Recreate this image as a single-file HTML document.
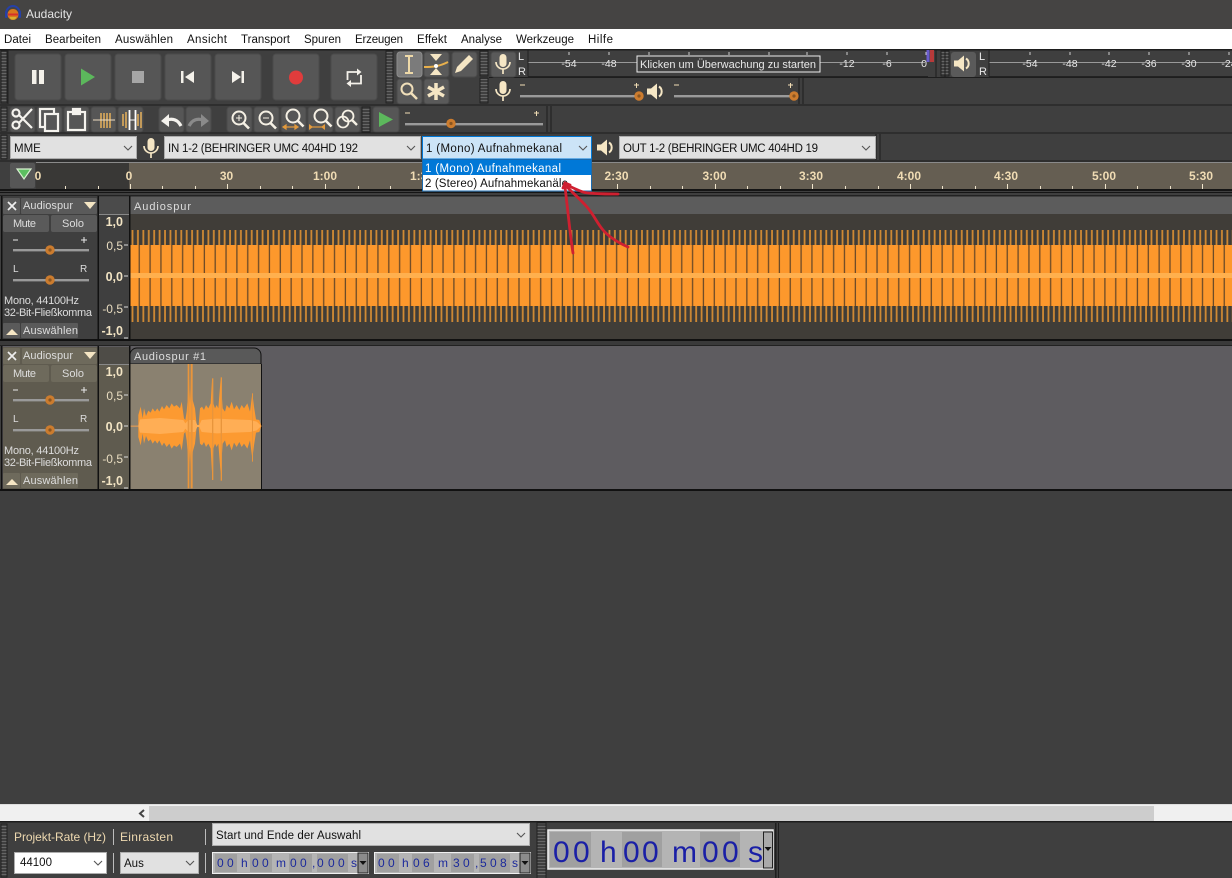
<!DOCTYPE html>
<html><head><meta charset="utf-8"><title>Audacity</title>
<style>
html,body{margin:0;padding:0;background:#3f3f3f;width:1232px;height:878px;overflow:hidden}
svg{display:block;position:absolute;left:0;top:0}
text{font-family:"Liberation Sans",sans-serif}
.m{font-size:11.5px;fill:#111}
.c{font-size:11.5px;fill:#111}
.t{font-size:11px;fill:#ddd}
.r{font-size:12px;font-weight:bold;fill:#f0dcb4;text-anchor:middle}
.v{font-size:10.5px;fill:#e8e8e8;text-anchor:middle}
.y{font-size:12px;fill:#e8dcc0;text-anchor:end}
.yb{font-size:12.5px;font-weight:bold;fill:#f2e4c4;text-anchor:end}
.l{font-size:12px;fill:#eed9b0}
.d{font-size:12px;fill:#1c2a9c}
.D{font-size:30px;fill:#1a1fa6}
</style></head><body>
<svg width="1232" height="878" viewBox="0 0 1232 878" xmlns="http://www.w3.org/2000/svg">
<defs>
<pattern id="solid" x="130" y="0" width="10.85" height="10" patternUnits="userSpaceOnUse"><rect width="10.85" height="10" fill="#fd982c"/><rect x="8.6" width="1.3" height="10" fill="#6b4a28"/></pattern>
<pattern id="thin" x="130" y="0" width="5.42" height="10" patternUnits="userSpaceOnUse"><rect width="5.42" height="10" fill="#403d38"/><rect x="1.6" width="1.8" height="10" fill="#d08a34"/></pattern>
<pattern id="grip" width="6" height="3" patternUnits="userSpaceOnUse"><rect width="6" height="1" y="1" fill="#666"/></pattern>
<g id="mic" fill="#f5e6c4"><rect x="-3.500" y="-10" width="7" height="13" rx="3.500"/><path d="M-7-2a7 7 0 0 0 14 0M0 5v5" fill="none" stroke="#f5e6c4" stroke-width="1.700"/></g>
<g id="spk" fill="#f5e6c4"><path d="M-9-3h4l6-5v16l-6-5h-4z"/><path d="M3-5a6 6 0 0 1 0 10" fill="none" stroke="#f5e6c4" stroke-width="2"/></g>
<path id="chev" d="M-4-2l4 4 4-4" fill="none" stroke="#555" stroke-width="1.100"/>
<g id="pan"><rect x="13" y="0" width="76" height="2.400" fill="#9a9a9a"/><circle cx="50" cy="1" r="4.700" fill="#cc7c2e"/><circle cx="50" cy="1" r="1.600" fill="#8a5520"/></g>
<g id="knob"><circle r="4.700" fill="#cc7c2e"/><circle r="1.600" fill="#8a5520"/></g>
<g id="mag" fill="none" stroke="#f5f0e4" stroke-width="2"><circle cx="-1" cy="-2" r="6.500"/><path d="M3.500 3l5.500 5.500" stroke-width="2.600"/></g>
<g id="wfh">
<polygon points="415,258 415,225 422,200 428,235 432,205 438,228 445,212 452,218 458,205 465,215 472,205 478,215 486,198 492,208 500,195 508,205 515,190 522,200 530,195 540,205 545,185 552,235 556,240 560,215 563,180 566,78 570,190 574,72 578,180 585,205 590,255 596,255 600,205 606,200 612,210 618,195 625,205 632,190 636,120 640,190 645,205 650,195 655,205 662,115 668,205 675,215 680,195 688,205 695,185 702,208 710,195 718,210 725,195 732,205 742,190 750,215 757,160 762,200 768,238 778,240 784,258" fill="#fc9a31"/>
</g>
</defs>

<!-- title bar -->
<rect width="1232" height="29" fill="#454443"/>
<path d="M6 14a7 8 0 0 1 14 0" fill="none" stroke="#2640a8" stroke-width="2"/>
<circle cx="13" cy="14.500" r="5.500" fill="#d9781e"/><rect x="8" y="13.500" width="10" height="2" fill="#d8302a"/><path d="M9.500 17h7l-1.500 2.500h-4z" fill="#d8b030"/>
<rect x="5" y="11" width="2.600" height="7" rx="1" fill="#2640a8"/><rect x="18.400" y="11" width="2.600" height="7" rx="1" fill="#2640a8"/>
<text x="26" y="18" fill="#e4e4e4" style="font-size:12px">Audacity</text>

<!-- menu -->
<rect y="29" width="1232" height="20" fill="#fff"/>
<text class="m" x="4" y="43" textLength="27">Datei</text>
<text class="m" x="45" y="43" textLength="56">Bearbeiten</text>
<text class="m" x="115" y="43" textLength="58">Auswählen</text>
<text class="m" x="187" y="43" textLength="40">Ansicht</text>
<text class="m" x="241" y="43" textLength="49">Transport</text>
<text class="m" x="304" y="43" textLength="37">Spuren</text>
<text class="m" x="355" y="43" textLength="48">Erzeugen</text>
<text class="m" x="417" y="43" textLength="30">Effekt</text>
<text class="m" x="461" y="43" textLength="41">Analyse</text>
<text class="m" x="516" y="43" textLength="58">Werkzeuge</text>
<text class="m" x="588" y="43" textLength="25">Hilfe</text>

<!-- toolbar base -->
<rect y="49" width="1232" height="113" fill="#3f3f3f"/>
<rect y="49" width="1232" height="1.500" fill="#1e1e1e"/>
<rect y="104.500" width="1232" height="1" fill="#1e1e1e"/>
<rect y="132.500" width="1232" height="1" fill="#1e1e1e"/>
<rect y="160.500" width="1232" height="1" fill="#1e1e1e"/>

<!-- grippers -->
<g fill="url(#grip)" stroke="#222" stroke-width="1">
<rect x="1" y="51" width="6" height="52"/><rect x="386" y="51" width="7" height="52"/>
<rect x="1" y="107" width="6" height="24"/><rect x="1" y="135" width="6" height="24"/>
<rect x="362" y="107" width="8" height="25"/>
<rect x="480" y="51" width="8" height="25"/><rect x="480" y="78" width="8" height="25"/>
<rect x="941" y="51" width="8" height="25"/>
</g>
<rect x="7.500" y="50" width="1" height="54" fill="#222"/>
<path d="M547 106v26M551 106v26M803 78v26M799 78v26M876 134v26M880 134v26M945 50v27M936 50v27" stroke="#1c1c1c" stroke-width="1"/>
<rect x="489" y="77" width="743" height="1" fill="#1e1e1e"/>

<!-- transport -->
<g fill="#565656" stroke="#4b4b4b">
<rect x="15" y="54" width="46" height="46" rx="3"/><rect x="65" y="54" width="46" height="46" rx="3"/><rect x="115" y="54" width="46" height="46" rx="3"/><rect x="165" y="54" width="46" height="46" rx="3"/><rect x="215" y="54" width="46" height="46" rx="3"/><rect x="273" y="54" width="46" height="46" rx="3"/><rect x="331" y="54" width="46" height="46" rx="3"/>
</g>
<path d="M32 70h4.500v14H32zM39 70h5v14h-5z" fill="#f4f1ea"/>
<path d="M81 68.500l14 8.500-14 8.500z" fill="#5cb85c"/>
<rect x="132" y="71" width="12" height="12" fill="#a6a6a6"/>
<path d="M181 71h2.500v12H181zM194 71v12l-9-6z" fill="#f4f1ea"/>
<path d="M232 71l9 6-9 6zM241.500 71h2.500v12h-2.500z" fill="#f4f1ea"/>
<circle cx="296" cy="77.500" r="7" fill="#e03c3c"/>
<path d="M347.500 80v-8h10M361 75v8.500h-10" fill="none" stroke="#f4f1ea" stroke-width="1.800"/>
<path d="M357 68.500l4.500 3.500-4.500 3.500zM351 80l-4.500 3.500 4.500 3.500z" fill="#f4f1ea"/>

<!-- tools -->
<rect x="397" y="52" width="25" height="25" rx="3" fill="#7b7b7b" stroke="#8c8c8c"/>
<g fill="#5a5a5a" stroke="#4b4b4b">
<rect x="424" y="52" width="25" height="25" rx="3"/><rect x="452" y="52" width="25" height="25" rx="3"/>
<rect x="397" y="79" width="25" height="25" rx="3"/><rect x="424" y="79" width="25" height="25" rx="3"/>
<rect x="491" y="52" width="25" height="25" rx="3"/>
</g>
<path d="M405 56h8M409 56v17M405 73h8" stroke="#eed9a8" stroke-width="2" fill="none"/>
<path d="M430 54h12l-6 7zM430 75h12l-6-7z" fill="#f5e6c4"/>
<path d="M424 67c8 0 14 0 24-5" stroke="#e8b04c" stroke-width="2" fill="none"/><circle cx="436" cy="66" r="2" fill="#fff"/>
<path d="M455 73l2-6 12-12 4 4-12 12z" fill="#f5e6c4"/>
<circle cx="407" cy="89" r="5.500" fill="none" stroke="#f0dfba" stroke-width="2"/><path d="M411 93l6 6" stroke="#f0dfba" stroke-width="2.500"/>
<path d="M436 83v17M428 87l16 9M444 87l-16 9" stroke="#f5e6c4" stroke-width="3.500"/>
<use href="#mic" x="503" y="64"/>
<use href="#mic" x="503" y="91"/>

<!-- meters -->
<text x="518" y="60" style="font-size:11px" fill="#e8e8e8">L</text><text x="518" y="75" style="font-size:11px" fill="#e8e8e8">R</text>
<rect x="528" y="62" width="397" height="1" fill="#999"/>
<path d="M528 50.500v26M528 76.500h400" stroke="#222" fill="none"/>
<g stroke="#ccc"><path d="M569 52v3M609 52v3M649 52v3M689 52v3M729 52v3M769 52v3M807 52v3M847 52v3M887 52v3M926 52v3"/></g>
<text class="v" x="569" y="67">-54</text><text class="v" x="609" y="67">-48</text>
<text class="v" x="847" y="67">-12</text><text class="v" x="887" y="67">-6</text><text class="v" x="924" y="67">0</text>
<rect x="637" y="56" width="183" height="16" fill="#3f3f3f" stroke="#eee"/>
<text x="640" y="68" fill="#e8e8e8" style="font-size:11px" textLength="176">Klicken um Überwachung zu starten</text>
<rect x="926.500" y="50" width="3" height="12" fill="#6a5ccc"/><rect x="930" y="50" width="4" height="12" fill="#b83a3a"/>
<rect x="951" y="52" width="25" height="25" rx="3" fill="#5a5a5a"/>
<use href="#spk" x="963" y="63.500"/>
<text x="979" y="60" style="font-size:11px" fill="#e8e8e8">L</text><text x="979" y="75" style="font-size:11px" fill="#e8e8e8">R</text>
<rect x="989" y="62" width="243" height="1" fill="#999"/>
<path d="M989 50.500v26M989 76.500h243" stroke="#222" fill="none"/>
<g stroke="#ccc"><path d="M1030 52v3M1070 52v3M1109 52v3M1149 52v3M1189 52v3M1229 52v3"/></g>
<text class="v" x="1030" y="67">-54</text><text class="v" x="1070" y="67">-48</text><text class="v" x="1109" y="67">-42</text><text class="v" x="1149" y="67">-36</text><text class="v" x="1189" y="67">-30</text><text class="v" x="1229" y="67">-24</text>

<!-- mixer sliders -->
<rect x="520" y="95" width="118" height="2.400" fill="#9a9a9a"/>
<path d="M520 85h5M634 85h5M636.500 83v5" stroke="#f0dcb4"/>
<use href="#knob" x="639" y="96"/>
<use href="#spk" x="656" y="91.500"/>
<rect x="674" y="95" width="120" height="2.400" fill="#9a9a9a"/>
<path d="M674 85h5M788 85h5M790.500 83v5" stroke="#f0dcb4"/>
<use href="#knob" x="794" y="96"/>

<!-- edit row -->
<g fill="#565656" stroke="#4b4b4b">
<rect x="10" y="107" width="25" height="25" rx="3"/><rect x="37" y="107" width="25" height="25" rx="3"/><rect x="64" y="107" width="25" height="25" rx="3"/><rect x="91" y="107" width="25" height="25" rx="3"/><rect x="118" y="107" width="25" height="25" rx="3"/>
<rect x="159" y="107" width="25" height="25" rx="3"/><rect x="186" y="107" width="25" height="25" rx="3"/>
<rect x="227" y="107" width="25" height="25" rx="3"/><rect x="254" y="107" width="25" height="25" rx="3"/><rect x="281" y="107" width="25" height="25" rx="3"/><rect x="308" y="107" width="25" height="25" rx="3"/><rect x="335" y="107" width="25" height="25" rx="3"/>
<rect x="373" y="107" width="26" height="25" rx="3"/>
</g>
<g fill="none" stroke="#f5f3ee" stroke-width="2.200">
<circle cx="16" cy="125" r="3.500"/><circle cx="16" cy="113" r="3.500"/><path d="M19 115l13 13M19 123l13-14"/>
<rect x="40" y="109" width="14" height="18"/><rect x="45" y="114" width="13" height="17" fill="#565656"/>
<rect x="68" y="112" width="17" height="18"/><rect x="73" y="109" width="7" height="5" fill="#f5f3ee"/>
</g>
<g fill="none" stroke="#e6b05c" stroke-width="1.500">
<path d="M101 113v15M104 113v15M107 113v15M110 113v15"/><path d="M123 114v12M126 112v16M138 114v12M141 112v16"/>
</g>
<path d="M93 120h22" stroke="#eedcc0"/><path d="M129.500 110v20M135.500 110v20" stroke="#fff" stroke-width="1.800"/><path d="M130 120h5" stroke="#fff"/>
<path d="M161 121l8-7v13z" fill="#f5f3ee"/><path d="M167 120c6-2 11 0 14 6" fill="none" stroke="#f5f3ee" stroke-width="3.200"/>
<path d="M209 121l-8-7v13z" fill="#8a8a8a"/><path d="M203 120c-6-2-11 0-14 6" fill="none" stroke="#8a8a8a" stroke-width="3.200"/>
<use href="#mag" x="240" y="120"/><path d="M236 118h6M239 115v6" stroke="#f5f0e4"/>
<use href="#mag" x="267" y="120"/><path d="M263 118h6" stroke="#f5f0e4"/>
<g fill="none" stroke="#f5f0e4" stroke-width="2"><circle cx="293" cy="116" r="6.500"/><path d="M298 121l5.500 5.500" stroke-width="2.600"/><circle cx="321" cy="116" r="6.500"/><path d="M326 121l5.500 5.500" stroke-width="2.600"/></g>
<path d="M284 127h13M286 125l-3 2 3 2zM295 125l3 2-3 2z" stroke="#e39a3c" fill="#e39a3c" stroke-width="1.200"/>
<path d="M309 127h15" stroke="#e39a3c" stroke-width="1.200"/><path d="M309 124v6l4-3zM325 124v6l-4-3z" fill="#e39a3c"/>
<g fill="none" stroke="#f5f0e4" stroke-width="1.800"><circle cx="343" cy="122" r="5.500"/><circle cx="348" cy="116" r="5.500"/><path d="M352 120l5 5" stroke-width="2.400"/></g>
<path d="M379 112l14 7.500-14 7.500z" fill="#5cb85c"/>
<rect x="405" y="123" width="138" height="2.400" fill="#9a9a9a"/>
<path d="M405 113h5M534 113h5M536.500 111v5" stroke="#f0dcb4"/>
<use href="#knob" x="451" y="123.500"/>

<!-- device row -->
<g fill="#e1e1e1" stroke="#adadad">
<rect x="10.500" y="136.500" width="126" height="22"/><rect x="164.500" y="136.500" width="256" height="22"/><rect x="619.500" y="136.500" width="256" height="22"/>
</g>
<text class="c" x="14" y="152">MME</text>
<use href="#chev" x="128" y="148"/>
<g transform="translate(151 148)"><use href="#mic"/></g>
<text class="c" x="168" y="152" textLength="190">IN 1-2 (BEHRINGER UMC 404HD 192</text>
<use href="#chev" x="411" y="148"/>
<rect x="422.500" y="136.500" width="169" height="22.500" fill="#cce4f7" stroke="#0078d7"/>
<text class="c" x="426" y="152" textLength="136">1 (Mono) Aufnahmekanal</text>
<use href="#chev" x="583" y="148"/>
<use href="#spk" x="606" y="147.500"/>
<text class="c" x="623" y="152" textLength="195">OUT 1-2 (BEHRINGER UMC 404HD 19</text>
<use href="#chev" x="866" y="148"/>

<!-- ruler -->
<rect y="162" width="1232" height="27" fill="#3f3f3f"/>
<rect x="36" y="162" width="93" height="27" fill="#393836"/>
<rect x="129" y="162" width="1103" height="27" fill="#655e52"/>
<rect x="36" y="162" width="1196" height="1" fill="#8a8a8a"/>
<rect x="10" y="163" width="25" height="25" rx="2" fill="#565656"/>
<path d="M17 169h14l-7 10z" fill="#5cc060" stroke="#d8f0d0" stroke-width="1.200"/>
<rect x="0" y="189" width="1232" height="2" fill="#151515"/>
<rect x="0" y="192" width="1232" height="1" fill="#151515"/>
<text class="r" x="38" y="180">0</text>
<text class="r" x="129" y="180">0</text><text class="r" x="226.500" y="180">30</text><text class="r" x="325" y="180">1:00</text><text class="r" x="422" y="180">1:30</text><text class="r" x="520" y="180">2:00</text><text class="r" x="616.500" y="180">2:30</text><text class="r" x="714.500" y="180">3:00</text><text class="r" x="811" y="180">3:30</text><text class="r" x="909" y="180">4:00</text><text class="r" x="1006" y="180">4:30</text><text class="r" x="1104" y="180">5:00</text><text class="r" x="1201" y="180">5:30</text>
<g stroke="#efe4cc" stroke-width="1">
<path d="M130.500 184v5M227.500 184v5M325.500 184v5M422.500 184v5M617.500 184v5M715.500 184v5M812.500 184v5M910.500 184v5M1007.500 184v5M1105.500 184v5M1202.500 184v5"/>
<path d="M65.500 186v3M98.500 186v3M162.500 186v3M195.500 186v3M260.500 186v3M292.500 186v3M358.500 186v3M390.500 186v3M650.500 186v3M682.500 186v3M747.500 186v3M780.500 186v3M845.500 186v3M878.500 186v3M942.500 186v3M975.500 186v3M1040.500 186v3M1072.500 186v3M1137.500 186v3M1170.500 186v3"/>
</g>

<!-- lower area -->
<rect y="193" width="1232" height="612" fill="#3f3f3f"/>

<!-- track 1 -->
<rect x="2" y="196" width="1230" height="144" fill="#3f3f3f"/>
<rect x="130" y="197" width="1102" height="17" fill="#5c5c5c"/>
<rect x="130" y="214" width="1102" height="125" fill="#403d38"/>
<text x="134" y="210" class="t" textLength="57">Audiospur</text>
<rect x="130" y="230" width="1102" height="92" fill="url(#thin)"/>
<rect x="130" y="245" width="1102" height="61" fill="url(#solid)"/>
<rect x="130" y="273" width="1102" height="5" fill="#ffb04e"/>
<rect x="129" y="196" width="1.500" height="144" fill="#111"/>
<rect y="339" width="1232" height="2" fill="#111"/>
<rect x="0" y="341" width="1232" height="5" fill="#3a3a3a"/>
<rect x="0" y="195" width="1232" height="1" fill="#222"/>
<rect x="1" y="196" width="1.500" height="144" fill="#111"/>
<rect x="97.500" y="196" width="1.500" height="144" fill="#111"/>
<rect x="99" y="197" width="30" height="17" fill="#4b4b4b"/>
<rect x="99" y="214" width="30" height="1" fill="#888"/>

<g fill="#5a5a5a">
<rect x="3" y="198" width="17" height="16" rx="1"/><rect x="21" y="198" width="76" height="16" rx="1"/>
<rect x="3" y="215" width="46" height="17" rx="2"/><rect x="51" y="215" width="46" height="17" rx="2"/>
<rect x="3" y="323" width="17" height="15" rx="1"/><rect x="21" y="323" width="57" height="15" rx="1"/>
</g>
<path d="M8 202l8 8M16 202l-8 8" stroke="#eee" stroke-width="1.700"/>
<text x="23" y="209" class="t" textLength="50">Audiospur</text>
<path d="M84 202h12l-6 7z" fill="#f5e6c4"/>
<text x="13" y="227" class="t" textLength="23">Mute</text><text x="62" y="227" class="t" textLength="22">Solo</text>
<path d="M13 240h5M81 240h6M84 237v6" stroke="#e8e8e8"/>
<use href="#pan" y="249"/>
<text x="13" y="272" class="t" style="font-size:10px">L</text><text x="80" y="272" class="t" style="font-size:10px">R</text>
<use href="#pan" y="279"/>
<text x="4" y="304" class="t" textLength="75">Mono, 44100Hz</text>
<text x="4" y="316" class="t" textLength="88">32-Bit-Fließkomma</text>
<path d="M6 335h12l-6-6z" fill="#f5e6c4"/>
<text x="23" y="334" class="t" textLength="55">Auswählen</text>
<text class="yb" x="123" y="226">1,0</text><text class="y" x="123" y="250">0,5</text><text class="yb" x="123" y="281">0,0</text><text class="y" x="123" y="313">-0,5</text><text class="yb" x="123" y="335">-1,0</text>
<path d="M124 245h4M124 276h4M124 307h4M124 338h4" stroke="#ddd"/>

<!-- track 2 -->
<rect x="2" y="346" width="1230" height="144" fill="#5e5c60"/>
<rect x="3" y="347" width="95" height="143" fill="#5f5b4f"/>
<rect x="99" y="347" width="30" height="143" fill="#5f5b4f"/>
<rect x="99" y="347" width="30" height="17" fill="#4e4c47"/>
<rect x="99" y="364" width="30" height="1" fill="#888"/>
<path d="M130 364v-9a7 7 0 0 1 7-7h117a7 7 0 0 1 7 7v9z" fill="#595959" stroke="#111"/>
<rect x="130" y="364" width="131" height="125" fill="#8a8170"/>
<path d="M261.500 364v126" stroke="#111"/>
<text x="134" y="360" class="t" textLength="72">Audiospur #1</text>
<g transform="translate(0 340) scale(.33333)">
<path d="M390 257h394v3H390z" fill="#f0a050"/>
<use href="#wfh"/>
<use href="#wfh" transform="translate(0 516) scale(1 -1)"/>
<polygon points="415,258 420,238 480,234 550,240 556,250 565,240 585,240 592,255 598,255 605,240 650,236 700,238 750,240 770,245 784,258 770,271 750,276 700,278 650,280 605,276 598,261 592,261 585,276 565,276 556,266 550,276 480,282 420,278" fill="#ffae55"/>
<g fill="#e8953c">
<rect x="563" y="72" width="5" height="373"/><rect x="572" y="72" width="6" height="373"/>
<rect x="636" y="115" width="4" height="305"/><rect x="662" y="112" width="4" height="310"/>
<rect x="756" y="160" width="3" height="205"/>
</g>
</g>
<rect x="129" y="346" width="1.500" height="144" fill="#111"/>
<rect y="489" width="1232" height="2" fill="#111"/>
<rect x="0" y="345" width="1232" height="1" fill="#222"/>
<rect x="1" y="346" width="1.500" height="144" fill="#111"/>
<rect x="97.500" y="346" width="1.500" height="144" fill="#111"/>

<g fill="#6e6a5c">
<rect x="3" y="348" width="17" height="16" rx="1"/><rect x="22" y="348" width="75" height="16" rx="1"/>
<rect x="3" y="365" width="46" height="17" rx="2"/><rect x="51" y="365" width="46" height="17" rx="2"/>
<rect x="3" y="473" width="17" height="15" rx="1"/><rect x="21" y="473" width="57" height="15" rx="1"/>
</g>
<path d="M8 352l8 8M16 352l-8 8" stroke="#eee" stroke-width="1.700"/>
<text x="23" y="359" class="t" textLength="50">Audiospur</text>
<path d="M84 352h12l-6 7z" fill="#f5e6c4"/>
<text x="13" y="377" class="t" textLength="23">Mute</text><text x="62" y="377" class="t" textLength="22">Solo</text>
<path d="M13 390h5M81 390h6M84 387v6" stroke="#e8e8e8"/>
<use href="#pan" y="399"/>
<text x="13" y="422" class="t" style="font-size:10px">L</text><text x="80" y="422" class="t" style="font-size:10px">R</text>
<use href="#pan" y="429"/>
<text x="4" y="454" class="t" textLength="75">Mono, 44100Hz</text>
<text x="4" y="466" class="t" textLength="88">32-Bit-Fließkomma</text>
<path d="M6 485h12l-6-6z" fill="#f5e6c4"/>
<text x="23" y="484" class="t" textLength="55">Auswählen</text>
<text class="yb" x="123" y="376">1,0</text><text class="y" x="123" y="400">0,5</text><text class="yb" x="123" y="431">0,0</text><text class="y" x="123" y="463">-0,5</text><text class="yb" x="123" y="485">-1,0</text>
<path d="M124 395h4M124 426h4M124 457h4M124 488h4" stroke="#ddd"/>

<!-- dropdown -->
<rect x="422.500" y="159.500" width="169" height="31.500" fill="#fff" stroke="#1a6bb0"/>
<rect x="423" y="160" width="168" height="15" fill="#0078d7"/>
<text x="425" y="172" style="font-size:11.500px" fill="#fff" textLength="136">1 (Mono) Aufnahmekanal</text>
<text x="425" y="187" style="font-size:11.500px" fill="#111" textLength="143">2 (Stereo) Aufnahmekanäle</text>

<!-- red annotation -->
<g fill="none" stroke="#cf2030" stroke-width="2.800" stroke-linecap="round">
<path d="M565 186c1 10 2 18 3 27s3 28 5 40"/>
<path d="M565 185c8 8 15 14 22 22s10 16 16 23 16 13 25 17"/>
<path d="M565 184c6 3 12 6 18 8s25 2 35 2"/>
<path d="M563 188l2-5 5 2"/>
</g>

<!-- scrollbar -->
<rect y="805" width="1232" height="16" fill="#f0f0f0"/>
<rect y="804" width="1232" height="1" fill="#ddd"/>
<path d="M144 810l-4 3.500 4 3.500" fill="none" stroke="#444" stroke-width="2"/>
<rect x="149" y="806" width="1005" height="15" fill="#cdcdcd"/>
<rect y="821" width="1232" height="1.500" fill="#1c1c1c"/>

<!-- bottom toolbars -->
<rect y="823" width="1232" height="55" fill="#3f3f3f"/>
<rect x="1" y="824" width="6" height="53" fill="url(#grip)" stroke="#222"/>
<rect x="537" y="823" width="9" height="55" fill="url(#grip)" stroke="#222"/>
<rect x="775" y="823" width="1.500" height="55" fill="#1e1e1e"/>
<rect x="778" y="823" width="1" height="55" fill="#1e1e1e"/>
<text class="l" x="14" y="841" textLength="92">Projekt-Rate (Hz)</text>
<text class="l" x="120" y="841" textLength="53">Einrasten</text>
<path d="M113.500 829v16M113.500 853v20M205.500 829v16M205.500 853v20" stroke="#bbb"/>
<rect x="14.500" y="852.500" width="92" height="21" fill="#fff" stroke="#adadad"/>
<text class="c" x="20" y="866">44100</text>
<use href="#chev" x="98" y="863"/>
<rect x="120.500" y="852.500" width="78" height="21" fill="#e1e1e1" stroke="#adadad"/>
<text class="c" x="124" y="867">Aus</text>
<use href="#chev" x="190" y="863"/>
<rect x="212.500" y="823.500" width="317" height="22" fill="#e1e1e1" stroke="#adadad"/>
<text class="c" x="216" y="839" textLength="145">Start und Ende der Auswahl</text>
<use href="#chev" x="521" y="835"/>

<rect x="212.500" y="852.500" width="156" height="21" fill="#b4b4b4" stroke="#f0f0f0"/>
<g fill="#a0a0a0"><rect x="215" y="854" width="22" height="18"/><rect x="250" y="854" width="22" height="18"/><rect x="289" y="854" width="23" height="18"/><rect x="317" y="854" width="31" height="18"/></g>
<text class="d" x="217 227 241 252 262 276 290 300 312 317 328 338 351" y="867">00h00m00,000s</text>
<rect x="358" y="853" width="10" height="20" fill="#8c8c8c" stroke="#222"/><path d="M359.500 861h7l-3.500 4z" fill="#111"/>
<rect x="374.500" y="852.500" width="156" height="21" fill="#b4b4b4" stroke="#f0f0f0"/>
<g fill="#a0a0a0"><rect x="377" y="854" width="22" height="18"/><rect x="412" y="854" width="22" height="18"/><rect x="451" y="854" width="23" height="18"/><rect x="479" y="854" width="31" height="18"/></g>
<text class="d" x="378 388 402 413 423 438 453 463 475 480 490 500 512" y="867">00h06m30,508s</text>
<rect x="520" y="853" width="10" height="20" fill="#8c8c8c" stroke="#222"/><path d="M521.500 861h7l-3.500 4z" fill="#111"/>

<rect x="548" y="830" width="225" height="39" fill="#b4b4b4" stroke="#f0f0f0" stroke-width="1.500"/>
<g fill="#a0a0a0"><rect x="550" y="832" width="41" height="35"/><rect x="622" y="832" width="40" height="35"/><rect x="700" y="832" width="40" height="35"/></g>
<text class="D" x="553 573 600 623 642 672 702 722 748" y="862">00h00m00s</text>
<rect x="763.500" y="832" width="9" height="36" fill="#aaa" stroke="#222"/><path d="M764.500 847h7l-3.500 4z" fill="#111"/>
</svg>
</body></html>
